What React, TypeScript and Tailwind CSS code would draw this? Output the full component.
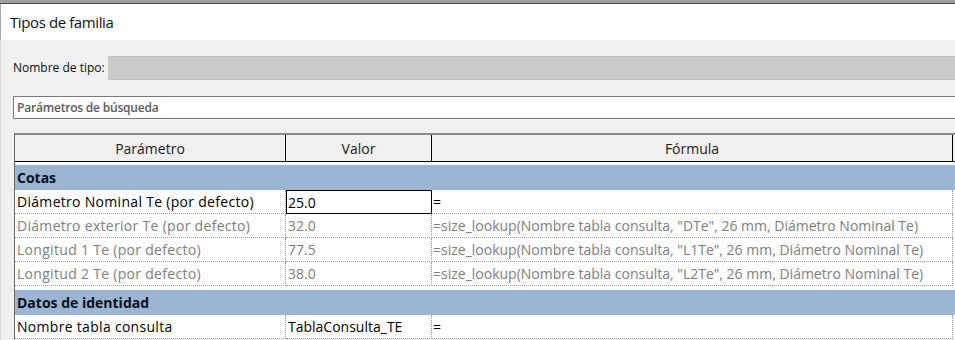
import React from "react";

const F = { fontFamily: '"Open Sans", "Noto Sans", sans-serif' };

type Row = { p: string; v: string; f: string; dim?: boolean; focus?: boolean };

const cotas: Row[] = [
  { p: "Diámetro Nominal Te (por defecto)", v: "25.0", f: "=", focus: true },
  { p: "Diámetro exterior Te (por defecto)", v: "32.0", f: '=size_lookup(Nombre tabla consulta, "DTe", 26 mm, Diámetro Nominal Te)', dim: true },
  { p: "Longitud 1 Te (por defecto)", v: "77.5", f: '=size_lookup(Nombre tabla consulta, "L1Te", 26 mm, Diámetro Nominal Te)', dim: true },
  { p: "Longitud 2 Te (por defecto)", v: "38.0", f: '=size_lookup(Nombre tabla consulta, "L2Te", 26 mm, Diámetro Nominal Te)', dim: true },
];

const ident: Row[] = [{ p: "Nombre tabla consulta", v: "TablaConsulta_TE", f: "=" }];

function DataRow({ r }: { r: Row }) {
  const c = r.dim ? "text-[#7e7e7e]" : "text-black";
  return (
    <div className={`flex h-[24px] text-[14px] ${c}`}>
      <div className="w-[271px] shrink-0 flex items-center pl-[2px] tracking-[0.3px] border-b border-r border-dotted border-[#9a9a9a] whitespace-nowrap">{r.p}</div>
      {r.focus ? (
        <div className="w-[146px] shrink-0 flex items-center pl-[1px] border border-black whitespace-nowrap">{r.v}</div>
      ) : (
        <div className="w-[146px] shrink-0 flex items-center pl-[2px] border-b border-r border-dotted border-[#9a9a9a] whitespace-nowrap">{r.v}</div>
      )}
      <div className="w-[521px] shrink-0 flex items-center pl-[1px] border-b border-r border-dotted border-[#9a9a9a] whitespace-nowrap">{r.f}</div>
    </div>
  );
}

function Group({ t }: { t: string }) {
  return (
    <div className="h-[25px] w-[941px] bg-[#9bb5d3] flex items-center pl-[2px] text-[14px] font-bold text-[#0a0f1a]">{t}</div>
  );
}

export default function App() {
  return (
    <div className="w-[955px] h-[340px] overflow-hidden bg-[#f0f0f0] relative" style={F}>
      <div className="h-[4px] bg-[#9e9e9e] border-b border-[#4a4a4a]" />
      <div className="h-[36px] bg-white flex items-center pl-[9px] text-[15px] tracking-[-0.4px] text-[#111] border-l border-[#a8a8a8]">Tipos de familia</div>
      <div className="pt-[16px] pl-[12px] border-l border-[#d8d8d8] h-[300px]">
        <div className="flex items-center h-[24px]">
          <div className="w-[95px] shrink-0 text-[12px] text-[#111]">Nombre de tipo:</div>
          <div className="flex-1 h-[24px] bg-[#cbcbcb] border-y border-[#c0c0c0]" />
        </div>
        <div className="mt-[16px] h-[23px] bg-white border border-[#7a7a7a] border-r-0 flex items-center pl-[3px] text-[12px] font-semibold text-[#5a5a5a] tracking-[-0.2px]">
          Parámetros de búsqueda
        </div>
        <div className="mt-[14px] ml-[1px] w-[945px] bg-white border-l border-[#6a6a6a]">
          <div className="flex h-[29px] bg-[#f0f0f0] border-t-2 border-[#8a8a8a] border-b border-b-black text-[14px] text-[#1a1a1a]">
            <div className="w-[271px] shrink-0 flex items-center justify-center border-r border-black">Parámetro</div>
            <div className="w-[146px] shrink-0 flex items-center justify-center border-r border-black">Valor</div>
            <div className="w-[521px] shrink-0 flex items-center justify-center border-r border-black">Fórmula</div>
          </div>
          <div className="h-[3px]" />
          <Group t="Cotas" />
          {cotas.map((r, i) => (
            <DataRow key={i} r={r} />
          ))}
          <div className="h-[4px]" />
          <Group t="Datos de identidad" />
          {ident.map((r, i) => (
            <DataRow key={i} r={r} />
          ))}
        </div>
      </div>
    </div>
  );
}
